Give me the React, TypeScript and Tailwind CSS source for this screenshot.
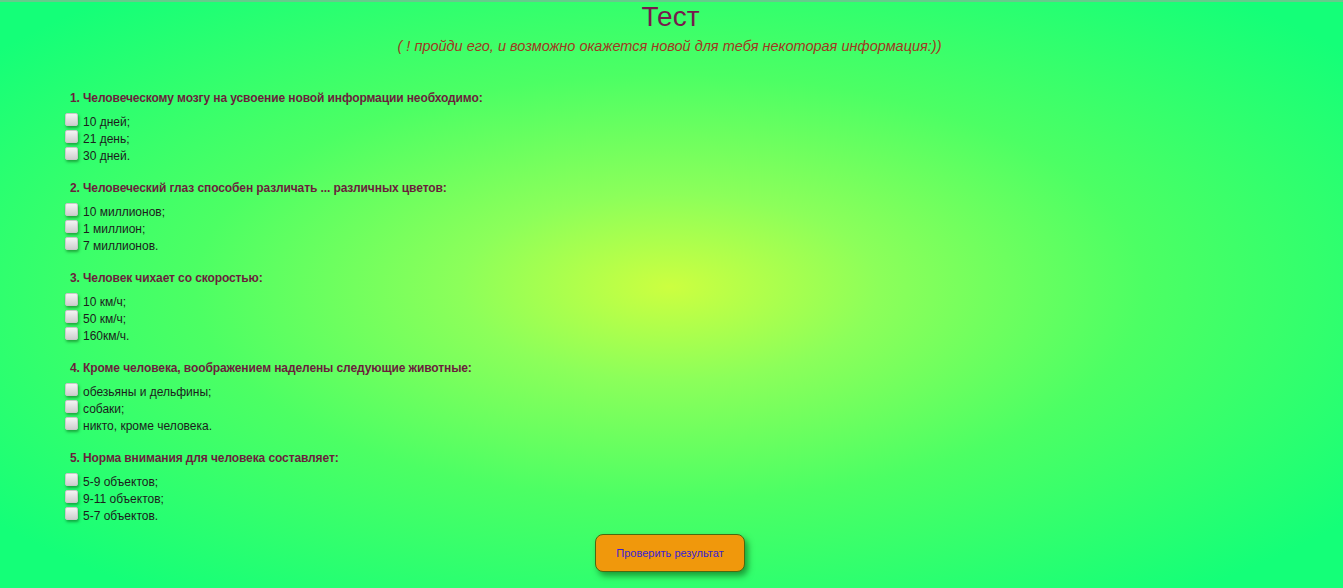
const questions = [
  {
    title: '1. Человеческому мозгу на усвоение новой информации необходимо:',
    answers: ['10 дней;', '21 день;', '30 дней.'],
  },
  {
    title: '2. Человеческий глаз способен различать ... различных цветов:',
    answers: ['10 миллионов;', '1 миллион;', '7 миллионов.'],
  },
  {
    title: '3. Человек чихает со скоростью:',
    answers: ['10 км/ч;', '50 км/ч;', '160км/ч.'],
  },
  {
    title: '4. Кроме человека, воображением наделены следующие животные:',
    answers: ['обезьяны и дельфины;', 'собаки;', 'никто, кроме человека.'],
  },
  {
    title: '5. Норма внимания для человека составляет:',
    answers: ['5-9 объектов;', '9-11 объектов;', '5-7 объектов.'],
  },
];

function Box() {
  return (
    <input
      type="checkbox"
      className="appearance-none w-[13px] h-[13px] mr-[5px] shrink-0 rounded-[2px] bg-gradient-to-b from-[#f4f4f4] to-[#cfcfcf] border border-[#c8c8c8] shadow-[1px_2px_3px_rgba(0,60,0,0.45)] relative -top-[2px]"
    />
  );
}

export default function App() {
  return (
    <div
      className="min-h-[588px] w-full border-t-2 border-[#66cc8c] bg-[radial-gradient(ellipse_at_670px_285px,#ccff40_0%,#8cff5a_22%,#4cff64_50%,#14ff78_90%)] font-['Liberation_Sans',Arial,sans-serif]"
    >
      <h1 className="text-center text-[28px] leading-[30px] text-[#771a4d] pr-[2px]">Тест</h1>
      <p className="text-center italic text-[14.5px] leading-[17px] text-[#a0381f] mt-[6px] pr-[4px]">
        ( ! пройди его, и возможно окажется новой для тебя некоторая информация:))
      </p>

      <div className="pl-[65px] pt-[36px] flex flex-col gap-[17px]">
        {questions.map((q) => (
          <div key={q.title}>
            <p className="pl-[5px] text-[12px] leading-[14px] font-bold text-[#6b1e3c] tracking-[-0.1px]">{q.title}</p>
            <div className="mt-[8px] flex flex-col">
              {q.answers.map((a) => (
                <label key={a} className="flex items-center h-[17px] text-[12px] text-[#1c1c1c]">
                  <Box />
                  <span>{a}</span>
                </label>
              ))}
            </div>
          </div>
        ))}
      </div>

      <div className="flex justify-center pt-[10px] pr-[3px]">
        <button className="w-[150px] h-[38px] rounded-[8px] bg-[#f0980c] border border-[#4a6a10] text-[11px] text-[#3a1ed0] shadow-[3px_4px_6px_rgba(0,60,0,0.5)]">
          Проверить результат
        </button>
      </div>
    </div>
  );
}
